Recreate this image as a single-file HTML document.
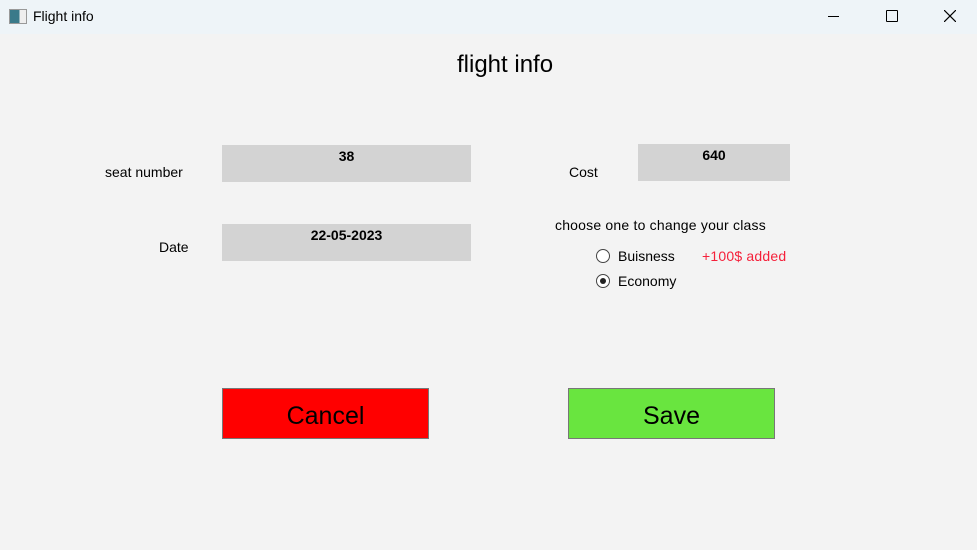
<!DOCTYPE html>
<html><head><style>
body{margin:0;width:977px;height:550px;background:#f3f3f3;font-family:"Liberation Sans",sans-serif;position:relative;overflow:hidden;color:#000}
.a{position:absolute;white-space:nowrap}
.tb{position:absolute;left:0;top:0;width:977px;height:34px;background:#eef4f8}
.box{position:absolute;background:#d3d3d3;font-weight:bold;font-size:14px;text-align:center;line-height:22px}
.l{font-size:14px}
.btn{position:absolute;width:205px;height:49px;border:1px solid #777;font-size:25px;text-align:center;line-height:54px}
.r{position:absolute;width:12px;height:12px;border:1px solid #444;border-radius:50%;background:#fff}
</style></head><body>
<div class="tb"></div>
<div class="a" style="left:9px;top:9px;width:16px;height:13px;border:1px solid #999;background:linear-gradient(90deg,#3a7a8a 60%,#eee 60%)"></div>
<div class="a" style="left:33px;top:8px;font-size:14px">Flight info</div>
<div class="a" style="left:828px;top:16px;width:11px;border-top:1px solid #000"></div>
<div class="a" style="left:886px;top:10px;width:10px;height:10px;border:1px solid #000;border-radius:1px"></div>
<svg class="a" style="left:944px;top:10px" width="12" height="12"><path d="M0 0L12 12M12 0L0 12" stroke="#000" stroke-width="1.2"/></svg>
<div class="a" style="left:457px;top:51px;font-size:24px">flight info</div>
<div class="a l" style="left:105px;top:164px">seat number</div>
<div class="box" style="left:222px;top:145px;width:249px;height:37px">38</div>
<div class="a l" style="left:159px;top:239px">Date</div>
<div class="box" style="left:222px;top:224px;width:249px;height:37px">22-05-2023</div>
<div class="a l" style="left:569px;top:164px">Cost</div>
<div class="box" style="left:638px;top:144px;width:152px;height:37px">640</div>
<div class="a l" style="left:555px;top:217px;letter-spacing:0.2px">choose one to change your class</div>
<div class="r" style="left:596px;top:249px"></div>
<div class="a l" style="left:618px;top:248px">Buisness</div>
<div class="a l" style="left:702px;top:248px;color:#f5203a;letter-spacing:0.2px">+100$ added</div>
<div class="r" style="left:596px;top:274px"></div>
<div class="a" style="left:600px;top:278px;width:6px;height:6px;border-radius:50%;background:#222"></div>
<div class="a l" style="left:618px;top:273px">Economy</div>
<div class="btn" style="left:222px;top:388px;background:#ff0000">Cancel</div>
<div class="btn" style="left:568px;top:388px;background:#69e53f">Save</div>
</body></html>
